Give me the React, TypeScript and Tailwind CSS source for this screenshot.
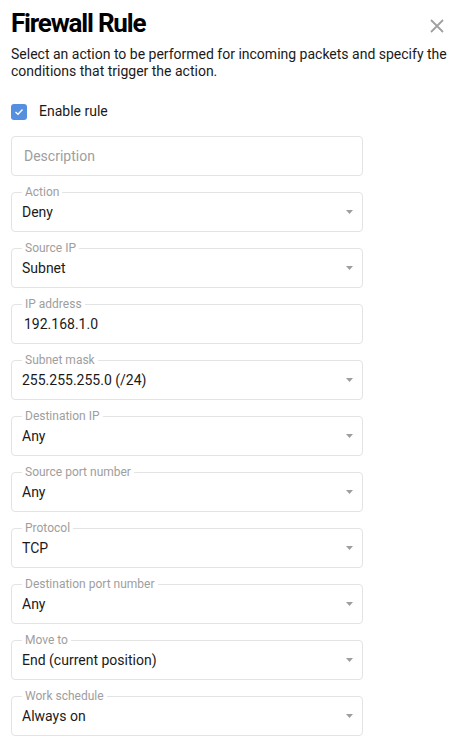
import React from "react";

type Field = { label?: string; value: string; select?: boolean; placeholder?: boolean };

const fields: Field[] = [
  { value: "Description", placeholder: true },
  { label: "Action", value: "Deny", select: true },
  { label: "Source IP", value: "Subnet", select: true },
  { label: "IP address", value: "192.168.1.0" },
  { label: "Subnet mask", value: "255.255.255.0 (/24)", select: true },
  { label: "Destination IP", value: "Any", select: true },
  { label: "Source port number", value: "Any", select: true },
  { label: "Protocol", value: "TCP", select: true },
  { label: "Destination port number", value: "Any", select: true },
  { label: "Move to", value: "End (current position)", select: true },
  { label: "Work schedule", value: "Always on", select: true },
];

function Arrow() {
  return (
    <svg width="7" height="4" viewBox="0 0 7 4" className="shrink-0">
      <path d="M0 0 L7 0 L3.5 4 Z" fill="#9e9e9e" />
    </svg>
  );
}

function FormField({ f }: { f: Field }) {
  return (
    <div className="relative flex h-10 items-center rounded-[4px] border border-[#e3e3e3] bg-white">
      {f.label && (
        <span className="absolute left-[10px] top-[-9px] bg-white px-[3px] text-[12px] leading-4 text-[#9e9e9e]">
          {f.label}
        </span>
      )}
      <span
        className={
          "flex-1 text-[14px] " +
          (f.select ? "pl-[10px] " : "pl-[12px] ") +
          (f.placeholder ? "text-[#9e9e9e]" : "text-[#1a1a1a]")
        }
      >
        {f.value}
      </span>
      {f.select && (
        <span className="pr-[9px]">
          <Arrow />
        </span>
      )}
    </div>
  );
}

export default function App() {
  return (
    <div className="min-h-screen bg-white px-[11px] pt-[7px] font-['Roboto',sans-serif] text-[#1a1a1a]">
      <div className="flex items-start justify-between">
        <h1 className="text-[26px] font-bold leading-8 tracking-[-1.2px] text-black">Firewall Rule</h1>
        <svg width="14" height="14" viewBox="0 0 14 14" className="mt-[12px]">
          <path d="M1 1 L13 13 M13 1 L1 13" stroke="#a0a0a0" strokeWidth="1.8" />
        </svg>
      </div>
      <p className="-mr-[8px] mt-[7px] text-[14px] leading-[17px]">
        Select an action to be performed for incoming packets and specify the conditions that trigger the action.
      </p>
      <label className="mt-[21px] flex items-center gap-3">
        <span className="flex h-4 w-4 items-center justify-center rounded-[3px] bg-[#5590e0]">
          <svg width="10" height="8" viewBox="0 0 10 8">
            <path d="M1.5 4 L4 6.3 L8.5 1.5" stroke="white" strokeWidth="1.3" fill="none" />
          </svg>
        </span>
        <span className="text-[14px]">Enable rule</span>
      </label>
      <div className="mt-[14px] flex w-[352px] flex-col gap-4 pb-4">
        {fields.map((f) => (
          <FormField key={f.label ?? f.value} f={f} />
        ))}
      </div>
    </div>
  );
}
